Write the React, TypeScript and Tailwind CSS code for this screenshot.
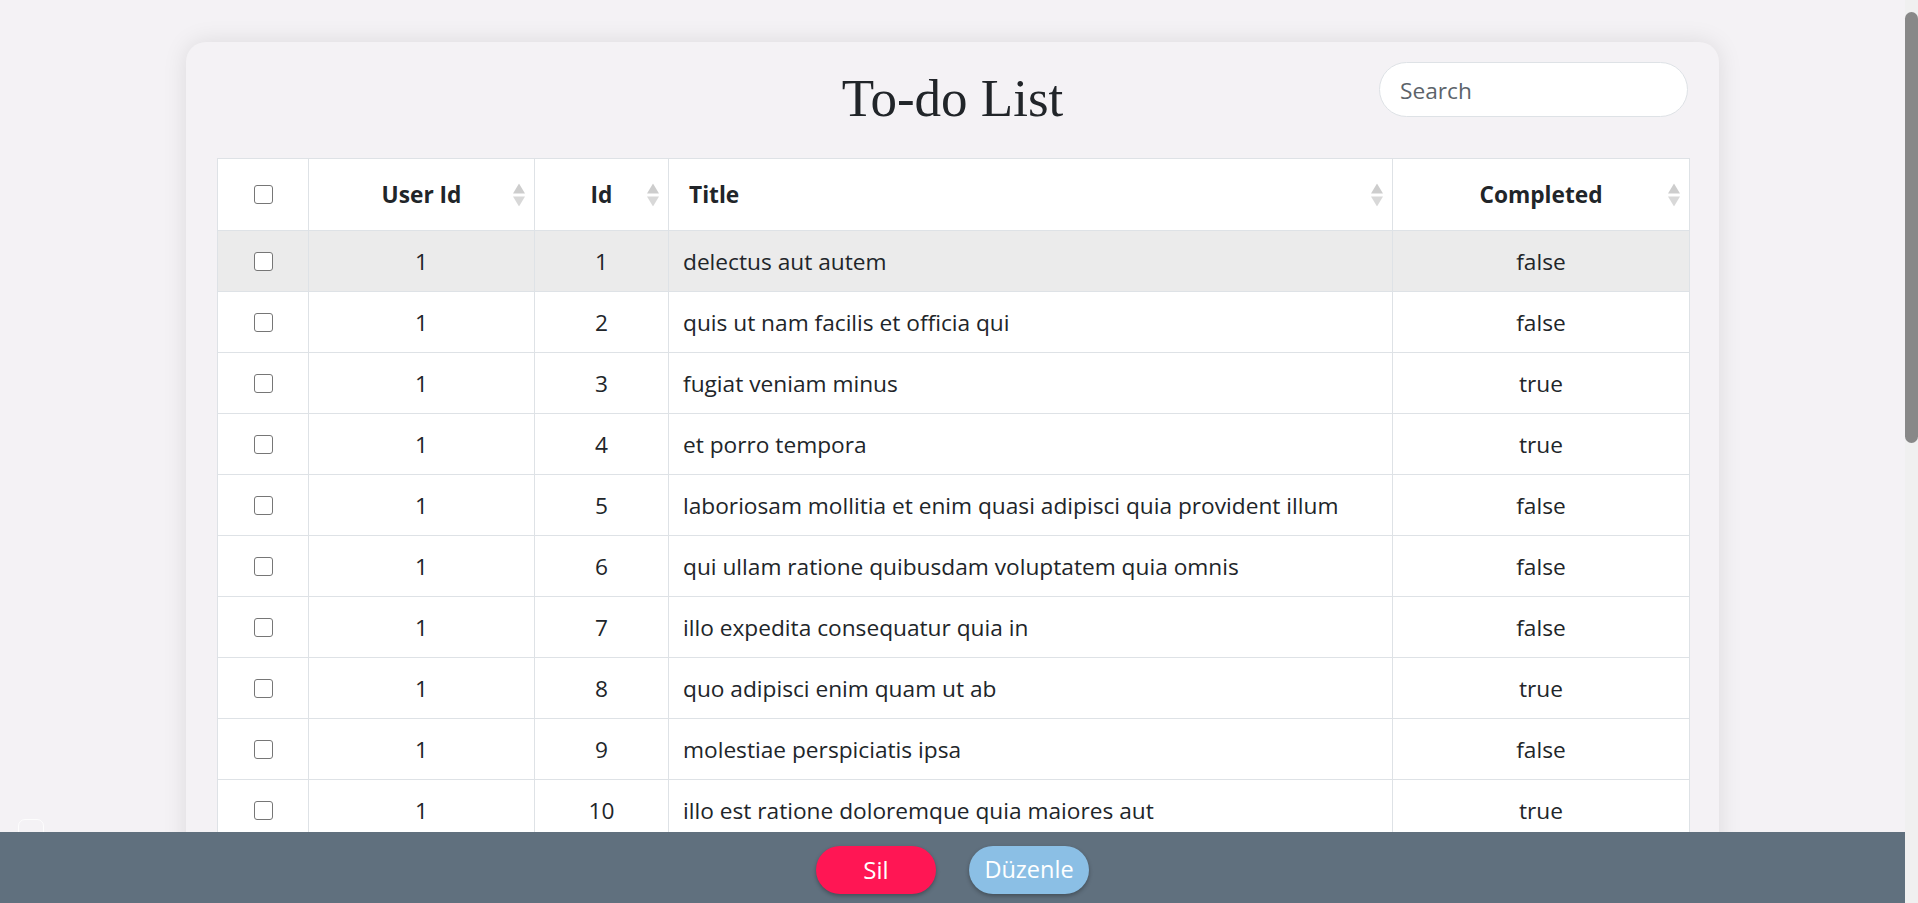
import React from "react"

type Todo = { userId: number; id: number; title: string; completed: boolean }

const todos: Todo[] = [
  { userId: 1, id: 1, title: "delectus aut autem", completed: false },
  { userId: 1, id: 2, title: "quis ut nam facilis et officia qui", completed: false },
  { userId: 1, id: 3, title: "fugiat veniam minus", completed: true },
  { userId: 1, id: 4, title: "et porro tempora", completed: true },
  { userId: 1, id: 5, title: "laboriosam mollitia et enim quasi adipisci quia provident illum", completed: false },
  { userId: 1, id: 6, title: "qui ullam ratione quibusdam voluptatem quia omnis", completed: false },
  { userId: 1, id: 7, title: "illo expedita consequatur quia in", completed: false },
  { userId: 1, id: 8, title: "quo adipisci enim quam ut ab", completed: true },
  { userId: 1, id: 9, title: "molestiae perspiciatis ipsa", completed: false },
  { userId: 1, id: 10, title: "illo est ratione doloremque quia maiores aut", completed: true },
  { userId: 1, id: 11, title: "vero rerum temporibus dolor", completed: true },
  { userId: 1, id: 12, title: "ipsa repellendus fugit nisi", completed: true },
]

function SortIcon() {
  return (
    <svg
      width="12"
      height="23"
      viewBox="0 0 12 23"
      className="absolute right-[9px] top-1/2 -translate-y-1/2"
    >
      <polygon points="6,0 12,10 0,10" fill="#cdcdcd" />
      <polygon points="0,13 12,13 6,23" fill="#d8d8d8" />
    </svg>
  )
}

function Check() {
  return (
    <input
      type="checkbox"
      className="mx-auto block h-[19px] w-[19px] appearance-none rounded-[3px] border-[1.5px] border-[#767676] bg-white"
    />
  )
}

export default function App() {
  return (
    <div className="flex h-screen overflow-hidden bg-[#f4f2f5] font-['Open_Sans',sans-serif] text-[#212529]">
      <main className="h-screen w-[1905px] shrink-0 overflow-hidden pt-[42px]">
        <div className="mx-auto w-[1533px] rounded-[20px] bg-[#f4f2f5] px-[31px] pb-[60px] pt-[20px] shadow-[0_0_24px_rgba(0,0,0,0.1)]">
          <div className="grid h-[96px] grid-cols-[1fr_auto_1fr] items-start">
            <div />
            <h1 className="mt-[7px] font-['Liberation_Serif',serif] text-[53px] leading-[58px] text-[#212529]">
              To-do List
            </h1>
            <input
              type="text"
              placeholder="Search"
              className="h-[55px] w-[309px] justify-self-end rounded-full border border-[#dee2e6] bg-white px-[20px] pt-[1px] text-[22.7px] text-[#212529] outline-none placeholder:text-[#5c636a]"
            />
          </div>

          <table className="w-full table-fixed border-collapse bg-white text-[22.7px]">
            <colgroup>
              <col className="w-[91px]" />
              <col className="w-[226px]" />
              <col className="w-[134px]" />
              <col className="w-[724px]" />
              <col className="w-[297px]" />
            </colgroup>
            <thead>
              <tr className="h-[72px]">
                <th className="border border-[#dee2e6] p-0">
                  <Check />
                </th>
                <th className="relative border border-[#dee2e6] px-[14px] pt-[2px] text-center font-bold">
                  User Id
                  <SortIcon />
                </th>
                <th className="relative border border-[#dee2e6] px-[14px] pt-[2px] text-center font-bold">
                  Id
                  <SortIcon />
                </th>
                <th className="relative border border-[#dee2e6] pl-[20px] pt-[2px] text-left font-bold">
                  Title
                  <SortIcon />
                </th>
                <th className="relative border border-[#dee2e6] px-[14px] pt-[2px] text-center font-bold">
                  Completed
                  <SortIcon />
                </th>
              </tr>
            </thead>
            <tbody>
              {todos.map((t) => (
                <tr key={t.id} className={t.id === 1 ? "h-[61px] bg-[#ebebeb]" : "h-[61px]"}>
                  <td className="border border-[#dee2e6] p-0">
                    <Check />
                  </td>
                  <td className="border border-[#dee2e6] pt-[2px] text-center">{t.userId}</td>
                  <td className="border border-[#dee2e6] pt-[2px] text-center">{t.id}</td>
                  <td className="border border-[#dee2e6] px-[14px] pt-[2px] text-left">{t.title}</td>
                  <td className="border border-[#dee2e6] pt-[2px] text-center">{t.completed ? "true" : "false"}</td>
                </tr>
              ))}
            </tbody>
          </table>
        </div>
      </main>

      <aside className="h-screen w-[13px] shrink-0 bg-[#f0f0f0] pt-[12px]">
        <div className="h-[431px] w-[13px] rounded-full bg-[#888888]" />
      </aside>

      <div className="fixed bottom-[60px] left-[18px] h-[24px] w-[26px] rounded-[7px] border border-white/80" />

      <div className="fixed bottom-0 left-0 right-[13px] flex h-[71px] justify-center gap-[33px] bg-[#60707e] pt-[14px]">
        <button className="h-[48px] w-[120px] rounded-full bg-[#ff1654] text-[24px] text-white shadow-[0_2px_4px_rgba(0,0,0,0.3)]">
          Sil
        </button>
        <button className="h-[48px] w-[120px] rounded-full bg-[#8bbfe5] text-[23.5px] text-white shadow-[0_2px_4px_rgba(0,0,0,0.3)]">
          Düzenle
        </button>
      </div>
    </div>
  )
}
